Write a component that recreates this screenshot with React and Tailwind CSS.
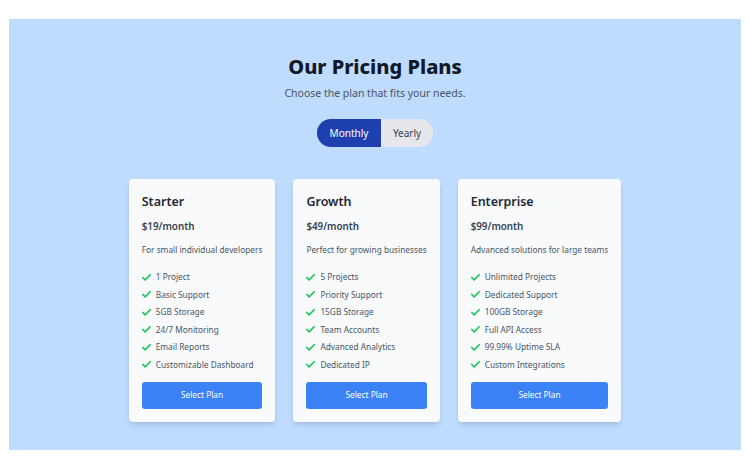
import React from "react";
import { Check } from "lucide-react";

const plans = [
  {
    name: "Starter",
    price: "$19/month",
    desc: "For small individual developers",
    features: ["1 Project", "Basic Support", "5GB Storage", "24/7 Monitoring", "Email Reports", "Customizable Dashboard"],
  },
  {
    name: "Growth",
    price: "$49/month",
    desc: "Perfect for growing businesses",
    features: ["5 Projects", "Priority Support", "15GB Storage", "Team Accounts", "Advanced Analytics", "Dedicated IP"],
  },
  {
    name: "Enterprise",
    price: "$99/month",
    desc: "Advanced solutions for large teams",
    features: ["Unlimited Projects", "Dedicated Support", "100GB Storage", "Full API Access", "99.99% Uptime SLA", "Custom Integrations"],
  },
];

export default function App() {
  return (
    <div className="bg-white px-[9px] py-[19px]" style={{ fontFamily: '"Noto Sans", "Open Sans", sans-serif' }}>
      <div className="bg-[#bfdbfe] h-[431px] flex flex-col items-center pt-[33px]">
        <h1 className="text-[20px] leading-[30px] font-extrabold text-[#111827]">Our Pricing Plans</h1>
        <p className="text-[10.5px] leading-[16px] text-[#4b5563] mt-[3px]">Choose the plan that fits your needs.</p>
        <div className="flex mt-[18px] rounded-full overflow-hidden h-[28px] text-[10px]">
          <button className="bg-[#1e40af] text-white w-[64px]">Monthly</button>
          <button className="bg-[#e5e7eb] text-[#374151] w-[52px]">Yearly</button>
        </div>
        <div className="flex gap-[18px] mt-[32px] items-start">
          {plans.map((p) => (
            <div key={p.name} className="bg-[#f8fafc] rounded-[4px] shadow-md px-[13px] pt-[14px] pb-[13px] flex flex-col">
              <h2 className="text-[12.5px] leading-[18px] font-semibold text-[#1f2937]">{p.name}</h2>
              <div className="text-[9.8px] leading-[16px] font-semibold text-[#374151] mt-[8px]">{p.price}</div>
              <div className="text-[8.3px] leading-[14px] text-[#4b5563] mt-[8px] whitespace-nowrap">{p.desc}</div>
              <ul className="mt-[13px] flex flex-col gap-[3.6px]">
                {p.features.map((f) => (
                  <li key={f} className="flex items-center gap-[4px] text-[8.3px] leading-[14px] text-[#4b5563]">
                    <Check className="w-[11px] h-[11px] text-[#22c55e] -ml-[1px]" strokeWidth={3.8} />
                    <span>{f}</span>
                  </li>
                ))}
              </ul>
              <button className="mt-[10px] h-[27px] rounded-[3px] bg-[#3b82f6] text-white text-[8.3px]">Select Plan</button>
            </div>
          ))}
        </div>
      </div>
    </div>
  );
}
